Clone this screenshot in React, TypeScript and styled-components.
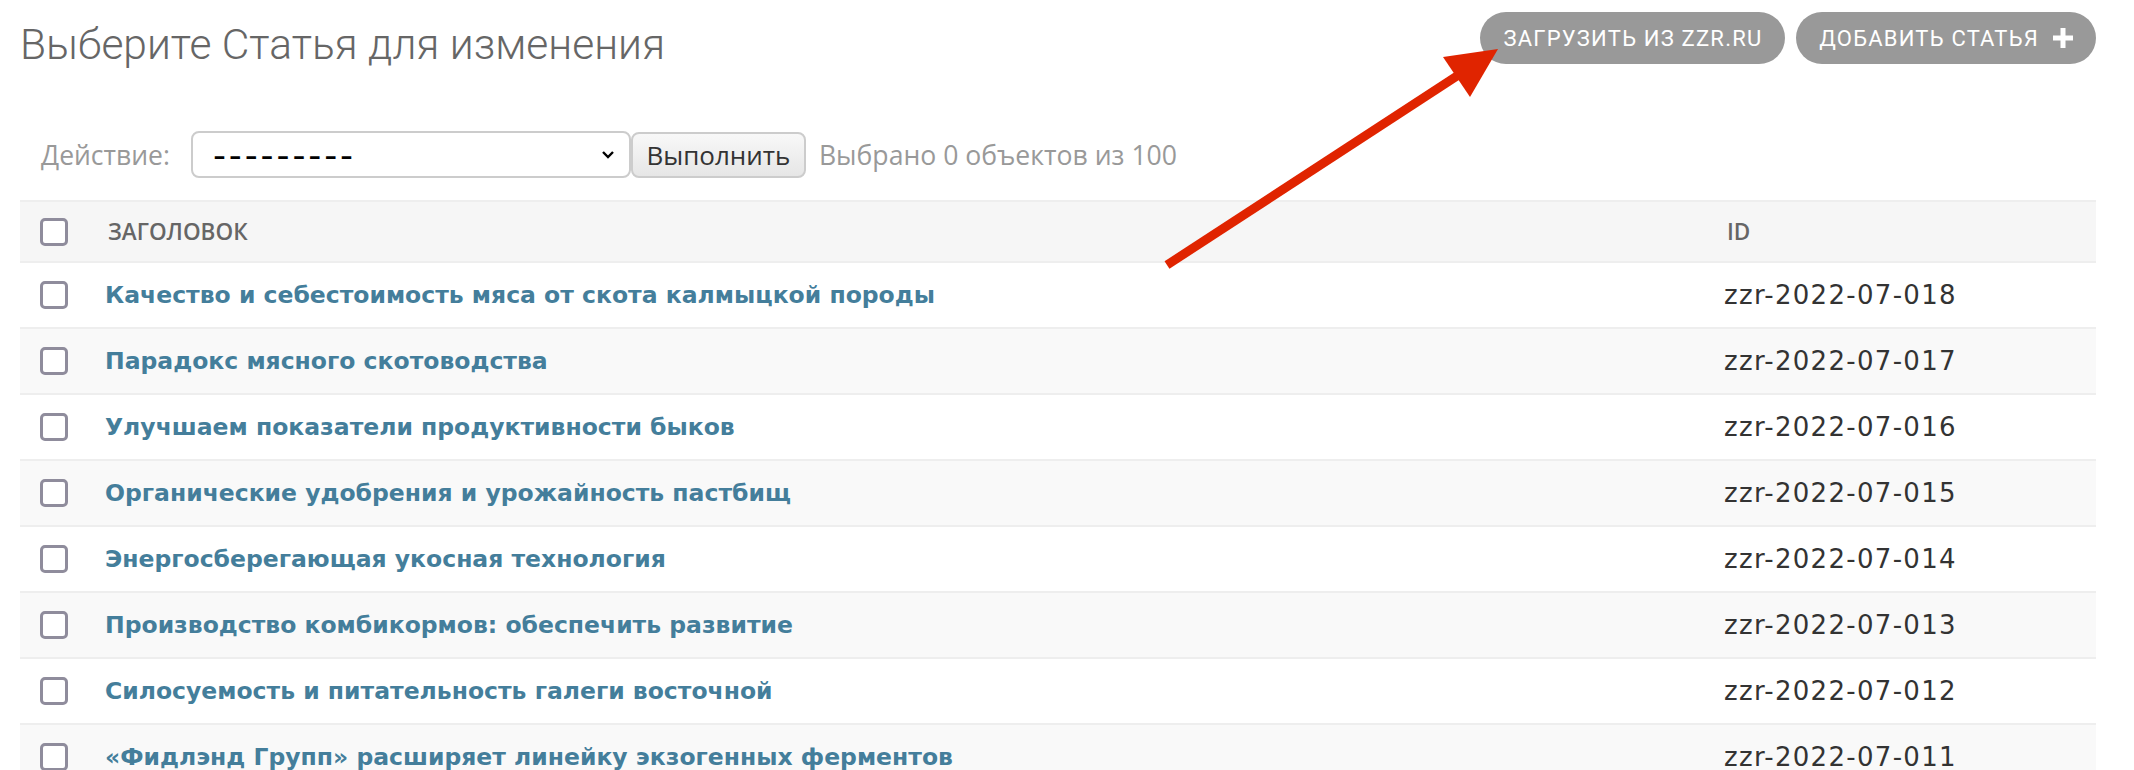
import React from "react";
import styled, { createGlobalStyle } from "styled-components";

const GlobalStyle = createGlobalStyle`
  html, body { margin: 0; padding: 0; background: #fff; }
  body { font-family: "DejaVu Sans", "Liberation Sans", sans-serif; color: #333; }
  * { box-sizing: border-box; }
`;

const Page = styled.div`
  position: relative;
  width: 2134px;
  height: 770px;
  overflow: hidden;
  padding: 12px 38px 0 20px;
  display: flex;
  flex-direction: column;
`;

const Header = styled.div`
  display: flex;
  justify-content: space-between;
  align-items: flex-start;
  height: 52px;
`;

const Title = styled.h1`
  margin: 12px 0 0 0;
  font-family: Roboto, "Open Sans", sans-serif;
  font-weight: 300;
  font-size: 42.5px;
  line-height: 42px;
  color: #666;
`;

const Tools = styled.div`
  display: flex;
  gap: 11px;
`;

const ToolButton = styled.a`
  display: flex;
  align-items: center;
  gap: 14px;
  height: 52px;
  padding: 0 23px;
  border-radius: 26px;
  background: #999;
  color: #fff;
  font-family: Roboto, "Open Sans", sans-serif;
  font-size: 22px;
  letter-spacing: 1.2px;
  text-transform: uppercase;
  white-space: nowrap;
`;

const Actions = styled.div`
  display: flex;
  align-items: center;
  margin-top: 67px;
  padding-left: 21px;
  height: 47px;
`;

const ActionLabel = styled.span`
  font-family: "Open Sans", sans-serif;
  font-size: 26.5px;
  color: #999;
  margin-right: 21px;
`;

const SelectBox = styled.div`
  width: 440px;
  height: 47px;
  border: 2px solid #ccc;
  border-radius: 8px;
  background: #fff;
  display: flex;
  align-items: center;
  justify-content: space-between;
  padding: 0 14px 0 20px;
  font-family: "DejaVu Sans", sans-serif;
  font-size: 36px;
  line-height: 1;
  letter-spacing: 2.9px;
  color: #000;
`;

const RunButton = styled.button`
  height: 46px;
  width: 175px;
  border: 2px solid #ccc;
  border-radius: 8px;
  background: linear-gradient(#f8f8f8, #e6e6e6);
  font-family: "Open Sans", sans-serif;
  font-size: 26px;
  color: #333;
  padding: 0;
`;

const Counter = styled.span`
  margin-left: 13px;
  font-family: "Open Sans", sans-serif;
  font-size: 26.6px;
  color: #999;
`;

const Table = styled.div`
  margin-top: 22px;
  border-top: 2px solid #eee;
  display: flex;
  flex-direction: column;
`;

const Row = styled.div<{ $head?: boolean; $alt?: boolean }>`
  display: grid;
  grid-template-columns: 85px 1619px 1fr;
  align-items: center;
  height: ${(p) => (p.$head ? "61px" : "66px")};
  border-bottom: 2px solid #eee;
  background: ${(p) => (p.$head ? "#f6f6f6" : p.$alt ? "#f9f9f9" : "#fff")};
`;

const Check = styled.span`
  justify-self: start;
  margin-left: 20px;
  width: 28px;
  height: 28px;
  border: 3px solid #8f8c9c;
  border-radius: 5px;
  background: #fff;
`;

const HeadCell = styled.span`
  font-family: "Open Sans", sans-serif;
  font-weight: 600;
  font-size: 22.5px;
  color: #666;
  text-transform: uppercase;
  padding-left: 3px;
`;

const TitleLink = styled.a`
  font-family: "DejaVu Sans", sans-serif;
  font-weight: bold;
  font-size: 23.5px;
  color: #447e9b;
  text-decoration: none;
  white-space: nowrap;
`;

const IdCell = styled.span`
  font-family: "DejaVu Sans", sans-serif;
  font-size: 26px;
  letter-spacing: 1.3px;
  color: #333;
`;

const Arrow = styled.svg`
  position: absolute;
  left: 0;
  top: 0;
  pointer-events: none;
`;

const rows = [
  ["Качество и себестоимость мяса от скота калмыцкой породы", "zzr-2022-07-018"],
  ["Парадокс мясного скотоводства", "zzr-2022-07-017"],
  ["Улучшаем показатели продуктивности быков", "zzr-2022-07-016"],
  ["Органические удобрения и урожайность пастбищ", "zzr-2022-07-015"],
  ["Энергосберегающая укосная технология", "zzr-2022-07-014"],
  ["Производство комбикормов: обеспечить развитие", "zzr-2022-07-013"],
  ["Силосуемость и питательность галеги восточной", "zzr-2022-07-012"],
  ["«Фидлэнд Групп» расширяет линейку экзогенных ферментов", "zzr-2022-07-011"],
];

export default function App() {
  return (
    <>
      <GlobalStyle />
      <Page>
        <Header>
          <Title>Выберите Статья для изменения</Title>
          <Tools>
            <ToolButton>Загрузить из zzr.ru</ToolButton>
            <ToolButton>
              Добавить Статья
              <svg width="20" height="20" viewBox="0 0 20 20">
                <path d="M7.5 0h5v7.5H20v5h-7.5V20h-5v-7.5H0v-5h7.5z" fill="#fff" />
              </svg>
            </ToolButton>
          </Tools>
        </Header>
        <Actions>
          <ActionLabel>Действие:</ActionLabel>
          <SelectBox>
            <span>---------</span>
            <svg width="14" height="10" viewBox="0 0 14 10">
              <path d="M2 2l5 5 5-5" stroke="#000" strokeWidth="2.4" fill="none" />
            </svg>
          </SelectBox>
          <RunButton>Выполнить</RunButton>
          <Counter>Выбрано 0 объектов из 100</Counter>
        </Actions>
        <Table>
          <Row $head>
            <Check />
            <HeadCell>Заголовок</HeadCell>
            <HeadCell>ID</HeadCell>
          </Row>
          {rows.map(([t, id], i) => (
            <Row key={id} $alt={i % 2 === 1}>
              <Check />
              <TitleLink href="#">{t}</TitleLink>
              <IdCell>{id}</IdCell>
            </Row>
          ))}
        </Table>
        <Arrow width="2134" height="770">
          <line x1="1167" y1="265" x2="1460" y2="74" stroke="#e02400" strokeWidth="9" />
          <polygon points="1498,49 1443,57 1470,97" fill="#e02400" />
        </Arrow>
      </Page>
    </>
  );
}
